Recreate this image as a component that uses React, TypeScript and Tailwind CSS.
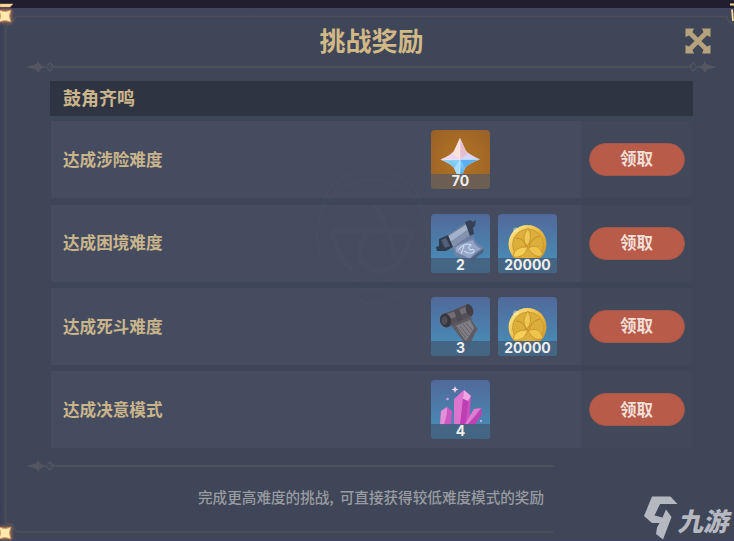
import type { ReactNode } from "react";

type Reward = { kind: "primogem" | "scroll" | "guide" | "coin" | "crystal"; count: number };

const rows: { label: string; rewards: Reward[] }[] = [
  { label: "达成涉险难度", rewards: [{ kind: "primogem", count: 70 }] },
  {
    label: "达成困境难度",
    rewards: [
      { kind: "scroll", count: 2 },
      { kind: "coin", count: 20000 },
    ],
  },
  {
    label: "达成死斗难度",
    rewards: [
      { kind: "guide", count: 3 },
      { kind: "coin", count: 20000 },
    ],
  },
  { label: "达成决意模式", rewards: [{ kind: "crystal", count: 4 }] },
];

// All item drawings share a 59x59 box
const art: Record<Reward["kind"], ReactNode> = {
  primogem: (
    <>
      <defs>
        <linearGradient id="gemTop" x1="0" y1="0" x2="1" y2="1">
          <stop offset="0" stopColor="#f3d3dd" />
          <stop offset="0.6" stopColor="#ecc9df" />
          <stop offset="1" stopColor="#b9c4f5" />
        </linearGradient>
        <linearGradient id="gemLow" x1="0" y1="0" x2="0" y2="1">
          <stop offset="0" stopColor="#8ed4fb" />
          <stop offset="1" stopColor="#3a9ae8" />
        </linearGradient>
      </defs>
      <path d="M29 8L35 21Q38 24 49 29.500Q38 33 34 38L29 51L23 38Q20 34 9.500 29.500Q20 25 23 21Z" fill="url(#gemTop)" />
      <path d="M9.500 29.500H49Q38 33 34 38L29 51L23 38Q20 34 9.500 29.500Z" fill="url(#gemLow)" />
      <path d="M29 8L29 29.500L21 24L23 21Z" fill="#fae3df" />
      <path d="M29 8L29 29.500L37 24L35 21Z" fill="#e6bdcf" />
      <path d="M9.500 29.500L29 29.500L21 23Q18 27 9.500 29.500Z" fill="#efd7ef" />
      <path d="M49 29.500L29 29.500L37 23.500Q41 27 49 29.500Z" fill="#cfd8fa" />
      <path d="M29 29.500L23 38L29 51Z" fill="#a9defb" />
      <path d="M29 29.500L34 38Q39 32 49 29.500Z" fill="#5bb0f3" />
      <path d="M29 10V46M12 29.500H47" stroke="#fff" strokeWidth="0.6" strokeOpacity="0.6" />
    </>
  ),
  scroll: (
    <>
      <path d="M20 31L43 23Q43 28 53 34L52 38Q47 40 40 51Q32 45 24 41Z" fill="#6f82a8" />
      <path d="M24 32L42 26Q44 32 50 35Q43 38 39 45Q32 41 25 38Z" fill="#94a6c8" />
      <path d="M27 36Q34 28 40 31Q36 33 39 36Q43 34 43 38Q38 41 33 37M33 32L30 40" fill="none" stroke="#cad6ec" strokeWidth="1.100" />
      <path d="M40 44L53 34L52 39Q46 41 42 49Z" fill="#4e5f83" />
      <path d="M14 23L36 8L42 22L20 36Z" fill="#6f7f9a" />
      <path d="M16 23L36 10L38 15L18 29Z" fill="#a3b2ca" />
      <path d="M18 29L38 15L40 20L21 34Z" fill="#8392ae" />
      <path d="M8 25L17 21L22 33L15 37L6 37L5 33L8 32Z" fill="#303b50" />
      <path d="M10 26L15 24L19 32L14 34Z" fill="#536078" />
      <path d="M34 8L39 6L42 8L45 6L44 12L42 14L43 20L39 22Z" fill="#354157" />
    </>
  ),
  guide: (
    <>
      <path d="M20 28L40 18Q40 25 47 32Q42 38 37 54Q33 44 29 40Q25 35 20 28Z" fill="#5e5b63" />
      <path d="M25 29L39 23L43 31L35 44Q29 37 25 29Z" fill="#827f85" />
      <path d="M26 30L35 41M29 29L37 39M32 27L39 36M35 26L41 33" stroke="#5c5a62" strokeWidth="0.9" />
      <path d="M13 17L37 7L41 19L17 30Z" fill="#555159" />
      <path d="M14 18L37 9L39 14L17 23Z" fill="#716d73" />
      <path d="M23 14L28 12L32 22L27 25Z" fill="#4d4a51" />
      <ellipse cx="14.500" cy="23.500" rx="5.500" ry="7" fill="#37353d" transform="rotate(-15 14.5 23.5)" />
      <ellipse cx="13.500" cy="23.500" rx="3" ry="4.200" fill="#504e55" />
      <ellipse cx="38.500" cy="13" rx="3.500" ry="6" fill="#413e46" transform="rotate(-20 38.5 13)" />
    </>
  ),
  coin: (
    <>
      <defs>
        <linearGradient id="coin" x1="0" y1="0" x2="1" y2="1">
          <stop offset="0" stopColor="#fff09b" />
          <stop offset="0.5" stopColor="#ebb83e" />
          <stop offset="1" stopColor="#c98f20" />
        </linearGradient>
      </defs>
      <circle cx="29.500" cy="30" r="19" fill="url(#coin)" />
      <circle cx="30" cy="30.500" r="15.500" fill="#dcae3c" stroke="#c8952d" strokeWidth="0.8" />
      <path d="M30 14Q23 23 28 33Q36 25 30 14Z" fill="#efc853" stroke="#c38d29" strokeWidth="0.8" />
      <path d="M15 43Q16 32 30 33Q26 45 15 43Z" fill="#f5cf58" stroke="#c38d29" strokeWidth="0.8" />
      <path d="M30 34Q41 28 45 41Q37 46 30 34Z" fill="#efc44c" stroke="#c38d29" strokeWidth="0.8" />
      <path d="M18 24Q26 24 29 33M42 22Q33 24 31 33" fill="none" stroke="#c38d29" strokeWidth="1" />
      <circle cx="17.500" cy="16" r="2.500" fill="#fff6bf" opacity="0.4" />
    </>
  ),
  crystal: (
    <>
      <path d="M23 19L33 10L40 16L38 46H23Z" fill="#cc4fc2" />
      <path d="M23 19L33 10L32 19L29 45H23Z" fill="#dc74d0" />
      <path d="M33 10L40 16L37 21L32 19Z" fill="#efa5e2" />
      <path d="M32 19L37 21L35 46H29Z" fill="#bd3fb4" />
      <path d="M10 31L16 27L21 31L20 46H9Z" fill="#cc58c2" />
      <path d="M10 31L16 27L16 33L13 45H9Z" fill="#e38fd8" />
      <path d="M43 29L50 28L51 34L43 46H34Z" fill="#bd43b5" />
      <path d="M43 29L50 28L44 36L36 45L34 44Z" fill="#e07cd4" />
      <path d="M24 6L25 8.500L27.500 9.500L25 10.500L24 13L23 10.500L20.500 9.500L23 8.500Z" fill="#f1d5fa" />
      <circle cx="16.500" cy="19" r="1.300" fill="#c9a5e4" />
      <circle cx="50" cy="41" r="1.200" fill="#bfb0e6" />
    </>
  ),
};

function RewardTile({ kind, count }: Reward) {
  const gold = kind === "primogem";
  return (
    <div
      className={`relative h-[59px] w-[59px] overflow-hidden rounded ${
        gold ? "bg-radial from-[#b57522] to-[#986028]" : "bg-linear-to-b from-[#50699a] to-[#4393bb]"
      }`}
    >
      <svg viewBox="0 0 59 59" className="h-full w-full">
        {art[kind]}
      </svg>
      <div
        className={`absolute inset-x-0 bottom-0 flex h-[15px] items-center justify-center pb-px font-['Inter',sans-serif] text-[14px] leading-none font-bold text-[#eeeeec] ${
          gold ? "bg-[#665d59]/90" : "bg-[#44617d]/90"
        }`}
      >
        {count}
      </div>
    </div>
  );
}

function Divider({ open = false }: { open?: boolean }) {
  return (
    <div className="flex h-3 items-center">
      <Ornament />
      <div className="h-[2px] flex-1 bg-[#4c5059]" />
      {!open && <Ornament flip />}
    </div>
  );
}

function Ornament({ flip = false }: { flip?: boolean }) {
  return (
    <svg viewBox="0 0 28 12" className={`h-3 w-7 shrink-0 ${flip ? "-scale-x-100" : ""}`}>
      <path d="M0 6L8 4Q11 3 12.500 0Q13.500 4 18 6Q13.500 8 12.500 12Q11 9 8 8Z" fill="#535661" />
      <path d="M17 6H20L24 10L27 7.500M21 4.500L24 2L28 6H24" fill="none" stroke="#505460" strokeWidth="1.600" />
    </svg>
  );
}

function Spark({ className }: { className: string }) {
  return (
    <svg viewBox="0 0 14 14" className={`absolute h-3.5 w-3.5 overflow-visible ${className}`}>
      <path
        d="M1 1Q7 4 13 1Q10 7 13 13Q7 10 1 13Q4 7 1 1Z"
        fill="#ffe9ad"
        stroke="#d89361"
        strokeWidth="0.8"
        className="drop-shadow-[0_0_2px_#e08b50]"
      />
    </svg>
  );
}

export default function App() {
  return (
    <div className="relative h-[541px] w-[734px] overflow-hidden bg-[#211e2f] pt-2 font-['Noto_Sans_CJK_SC',sans-serif]">
      <main className="flex h-[533px] flex-col bg-[#3f4557] bg-linear-to-b from-[#414560] from-0% to-[#3f4657] to-[12px]">
        <header className="relative flex h-[53px] shrink-0 items-center justify-center pt-[11px]">
          <h1 className="mr-[-9px] text-[26px] leading-none font-bold text-[#d0b887]">挑战奖励</h1>
          <button aria-label="关闭" className="absolute top-[20px] right-[23px]">
            <svg viewBox="0 0 26 26" className="h-[26px] w-[26px]">
              <path d="M4 4L22 22M22 4L4 22" stroke="#b6a37d" strokeWidth="4.600" />
              <path d="M0.500 0.500H9L7.500 4L4 7.500L0.500 9ZM25.500 0.500V9L22 7.500L18.500 4L17 0.500ZM0.500 25.500V17L4 18.500L7.500 22L9 25.500ZM25.500 25.500H17L18.500 22L22 18.500L25.500 17Z" fill="#b6a37d" />
            </svg>
          </button>
        </header>

        <div className="ml-[26px] w-[691px]">
          <Divider />
        </div>

        <section className="mt-2 ml-[50px] w-[643px]">
          <h2 className="flex h-[35px] items-center bg-[#2f3443] pb-[3px] pl-[13px] text-[18px] leading-none font-bold text-[#cbb68b]">
            鼓角齐鸣
          </h2>
          <div className="flex flex-col gap-[6.400px] bg-[#3c4657] px-px pt-[5.200px]">
            {rows.map((row) => (
              <div key={row.label} className="flex h-[77px]">
                <div className="flex w-[530px] items-center bg-[#464c5f] pl-3">
                  <span className="w-[368px] pb-px text-[16.600px] leading-none font-bold text-[#c9b58c]">
                    {row.label}
                  </span>
                  <div className="flex gap-2">
                    {row.rewards.map((reward) => (
                      <RewardTile key={reward.kind} {...reward} />
                    ))}
                  </div>
                </div>
                <div className="flex flex-1 items-center bg-[#414859] pl-[7.500px]">
                  <button className="h-[33px] w-[96px] rounded-full border border-[#a4574d] bg-[#b85c49] pb-0.5 text-[16.500px] leading-none font-bold text-[#f0dfd7]">
                    领取
                  </button>
                </div>
              </div>
            ))}
          </div>
        </section>

        <div className="mt-3 ml-[26px] w-[528px]">
          <Divider open />
        </div>
        <p className="mt-[18px] ml-[198px] text-[14.600px] leading-none font-medium whitespace-nowrap text-[#989ba1]">
          完成更高难度的挑战<span className="mr-[6px]">,</span>可直接获得较低难度模式的奖励
        </p>
      </main>

      {/* faint emblem behind the list */}
      <svg
        viewBox="0 0 180 180"
        fill="none"
        stroke="#7a96b0"
        className="pointer-events-none absolute top-[145px] left-[282px] h-[180px] w-[180px] opacity-[0.025]"
      >
        <circle cx="90" cy="90" r="55" strokeWidth="2" />
        <path d="M50 86H130Q120 132 90 125Q66 112 88 85" strokeWidth="5" />
        <path d="M50 86Q55 112 70 125M92 60Q110 85 112 112" strokeWidth="5" />
        <path d="M40 72Q38 40 70 28L90 8L110 28Q142 40 140 72M72 150Q90 168 120 150" strokeWidth="2" />
      </svg>

      {/* outer frame */}
      <svg viewBox="0 0 734 541" className="pointer-events-none absolute inset-0 h-full w-full">
        <path
          d="M734 24Q728 23 727 16.500H18Q14 17 13 22Q12 24 8 24Q5.500 27 5.500 32V519Q6 524 11 524Q13 524 13 527Q15 532 20 532H554"
          fill="none"
          stroke="#4c505b"
          strokeWidth="1.600"
        />
        <path d="M0 540.500H734" stroke="#3f436b" />
        <path d="M0 8V541" stroke="#3b3f59" strokeWidth="5" />
        <path d="M0 4H13L10 7H0Z" fill="#ffe2a3" stroke="#d99a68" strokeWidth="0.6" />
        <path d="M734 4.500H730M732 9.500L733 21" fill="none" stroke="#ffdda0" strokeWidth="1.800" />
      </svg>
      <Spark className="top-[9px] -left-0.5" />
      <Spark className="top-[526px] -left-0.5" />

      {/* site watermark */}
      <div className="absolute top-[496px] left-[644px] flex">
        <svg viewBox="0 0 34 44" className="h-11 w-[34px]">
          <path
            d="M8 0.500H26.500L33.500 8H16L10.500 19.500L18.500 21.500L22 13.500L27.500 21L19 43.500L12 38L13 31.500L15.500 27H8L0 20Z"
            fill="#b5b8c1"
          />
        </svg>
        <span className="mt-[11px] ml-px -skew-x-12 text-[25.500px] leading-none font-black whitespace-nowrap text-[#b5b8c1]">
          九游
        </span>
      </div>
    </div>
  );
}
